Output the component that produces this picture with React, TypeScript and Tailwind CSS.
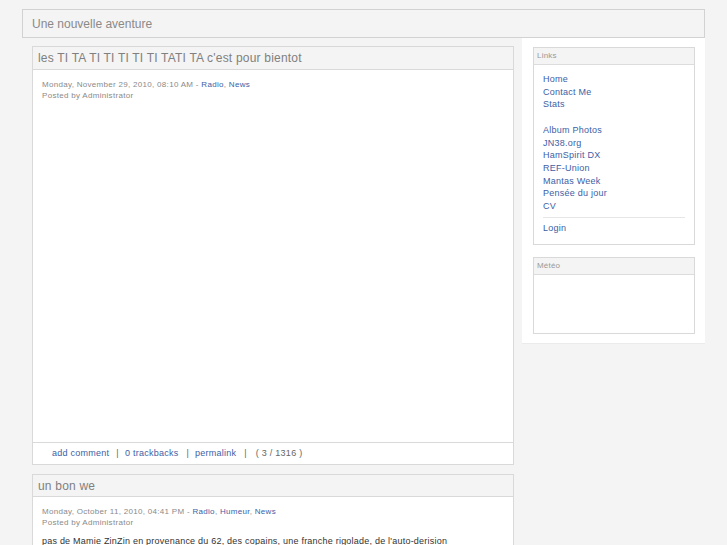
const links1 = ['Home', 'Contact Me', 'Stats']
const links2 = ['Album Photos', 'JN38.org', 'HamSpirit DX', 'REF-Union', 'Mantas Week', 'Pensée du jour', 'CV']

function Meta({ date, cats }: { date: string; cats: string[] }) {
  return (
    <div className="text-[8px] leading-[11px] tracking-[0.3px] text-[#8a8a8a]">
      <div>
        {date} -{' '}
        {cats.map((c, i) => (
          <span key={c}>
            <a className="text-[#3d5ea6]">{c}</a>
            {i < cats.length - 1 ? ', ' : ''}
          </span>
        ))}
      </div>
      <div>Posted by Administrator</div>
    </div>
  )
}

function SideBox({ title, children, bodyClass }: { title: string; children?: React.ReactNode; bodyClass: string }) {
  return (
    <div className="border border-[#d9d9d9] bg-white">
      <div className="h-[17px] bg-[#f4f4f4] border-b border-[#dcdcdc] px-[3px] flex items-center text-[8px] tracking-[0.2px] text-[#999]">
        {title}
      </div>
      <div className={bodyClass}>{children}</div>
    </div>
  )
}

export default function App() {
  return (
    <div className="min-h-screen bg-[#f4f4f4] font-['Liberation_Sans',Arial,sans-serif] overflow-hidden h-[545px]">
      <div className="ml-[22px] w-[683px] pt-[9px]">
        <header className="h-[29px] border border-[#d2d2d2] bg-[#f4f4f4] px-[9px] flex items-center text-[12px] text-[#8a8a8a]">
          Une nouvelle aventure
        </header>
        <div className="flex items-start">
          <main className="w-[500px] pl-[10px] pt-[8px] flex flex-col gap-[9px]">
            <article className="w-[482px] border border-[#d9d9d9] bg-white">
              <div className="h-[23px] bg-[#f4f4f4] border-b border-[#d9d9d9] px-[5px] flex items-center text-[12px] tracking-[0.2px] text-[#808080]">
                les TI TA TI TI TI TI TI TATI TA c'est pour bientot
              </div>
              <div className="h-[372px] pl-[9px] pt-[9px]">
                <Meta date="Monday, November 29, 2010, 08:10 AM" cats={['Radio', 'News']} />
              </div>
              <div className="h-[22px] border-t border-[#d9d9d9] pl-[19px] flex items-center text-[9px] tracking-[0.25px] text-[#666] whitespace-pre">
                <a className="text-[#3d5ea6]">add comment</a>
                <span className="ml-[7px] mr-[6px]">|</span>
                <a className="text-[#3d5ea6]">0 trackbacks</a>
                <span className="ml-[8px] mr-[6px]">|</span>
                <a className="text-[#3d5ea6]">permalink</a>
                <span className="ml-[8px] mr-[9px]">|</span>
                <span>( 3 / 1316 )</span>
              </div>
            </article>
            <article className="w-[482px] border border-[#d9d9d9] bg-white">
              <div className="h-[22px] bg-[#f4f4f4] border-b border-[#d9d9d9] px-[5px] flex items-center text-[12px] tracking-[0.2px] text-[#808080]">
                un bon we
              </div>
              <div className="pl-[9px] pt-[9px] pb-[20px]">
                <Meta date="Monday, October 11, 2010, 04:41 PM" cats={['Radio', 'Humeur', 'News']} />
                <p className="mt-[7px] text-[9px] leading-[12px] tracking-[0.22px] text-[#333]">
                  pas de Mamie ZinZin en provenance du 62, des copains, une franche rigolade, de l'auto-derision
                </p>
              </div>
            </article>
          </main>
          <aside className="w-[183px] h-[306px] bg-white border-b border-[#ebebeb] pl-[11px] pr-[10px] pt-[9px] flex flex-col gap-[12px]">
            <SideBox title="Links" bodyClass="px-[9px] pt-[8px] pb-[10px] text-[9px] leading-[12.7px] tracking-[0.25px] text-[#3d5ea6]">
              {links1.map((l) => (
                <div key={l}>{l}</div>
              ))}
              <div className="h-[12.7px]" />
              {links2.map((l) => (
                <div key={l}>{l}</div>
              ))}
              <div className="border-t border-[#e6e6e6] mt-[4px] mb-[4px]" />
              <div>Login</div>
            </SideBox>
            <SideBox title="Météo" bodyClass="h-[58px]" />
          </aside>
        </div>
      </div>
    </div>
  )
}
